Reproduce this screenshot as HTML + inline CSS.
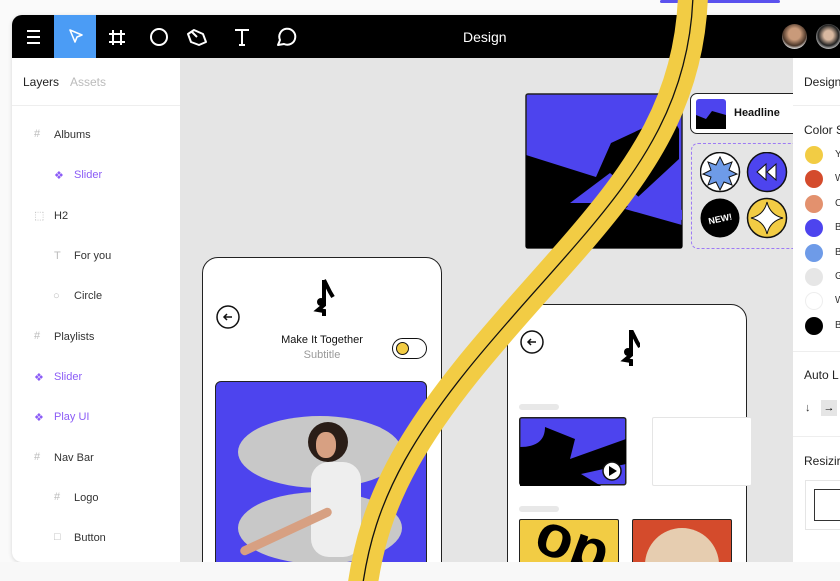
<!DOCTYPE html>
<html><head><style>
*{margin:0;padding:0;box-sizing:border-box}
body{width:840px;height:581px;background:#fafafa;font-family:"Liberation Sans",sans-serif;position:relative;overflow:hidden}
.abs{position:absolute}
.win{left:12px;top:15px;width:840px;height:547px;background:#e5e5e5;border-radius:10px;overflow:hidden;box-shadow:0 1px 4px rgba(0,0,0,.15)}
.top{left:0;top:0;width:840px;height:43px;background:#000}
.left{left:0;top:43px;width:168px;height:504px;background:#fff}
.right{left:781px;top:43px;width:60px;height:504px;background:#fff;z-index:5}
.layer{position:absolute;font-size:11px;color:#333}
.layer.p{color:#8b5cf6}
.ic{position:absolute;font-size:11px;color:#bbb}
.sw{position:absolute;left:12px;width:18px;height:18px;border-radius:50%}
.rt{position:absolute;left:42px;font-size:10px;color:#333}
</style></head><body>
<div class="abs win">
 <div class="abs top">
  <svg class="abs" style="left:0;top:0" width="300" height="43">
   <g stroke="#fff" stroke-width="2" fill="none">
    <path d="M15 16h13M15 22h13M15 28h13"/>
   </g>
   <rect x="42" y="0" width="42" height="43" fill="#4b9cf5"/>
   <path d="M58 15l12 5-5 2-2 5z" stroke="#fff" stroke-width="1.6" fill="none" stroke-linejoin="round"/>
   <g stroke="#fff" stroke-width="2" fill="none">
    <path d="M101 15v15M109 15v15M97 19h16M97 27h16"/>
    <circle cx="147" cy="22" r="8"/>
    <path d="M182 15l9 4 3 8-7 3-8-3-3-8zM180 17l5 5" stroke-linejoin="round"/>
    <path d="M223 15h14M230 15v15M227 30h6"/>
    <path d="M266 30l2-5a8 8 0 1 1 4 4z" stroke-linejoin="round"/>
   </g>
  </svg>
  <div class="abs" style="left:451px;top:14px;color:#fff;font-size:14px">Design</div>
  <div class="abs" style="left:770px;top:9px;width:25px;height:25px;border-radius:50%;background:radial-gradient(circle at 50% 40%,#c99a7a 30%,#4a3528 60%,#ddd 75%)"></div>
  <div class="abs" style="left:804px;top:9px;width:25px;height:25px;border-radius:50%;background:radial-gradient(circle at 50% 45%,#d8b8a0 25%,#222 55%,#ccc 75%)"></div>
 </div>
 <div class="abs left">
  <div class="abs" style="left:11px;top:17px;font-size:12px;color:#222">Layers</div>
  <div class="abs" style="left:58px;top:17px;font-size:12px;color:#bbb">Assets</div>
  <div class="abs" style="left:0;top:47px;width:168px;height:1px;background:#eee"></div>
  <span class="ic" style="left:22px;top:70px">#</span><span class="layer" style="left:42px;top:71px">Albums</span>
  <span class="ic" style="left:42px;top:111px;color:#8b5cf6">❖</span><span class="layer p" style="left:62px;top:111px">Slider</span>
  <span class="ic" style="left:22px;top:151px">⬚</span><span class="layer" style="left:42px;top:152px">H2</span>
  <span class="ic" style="left:42px;top:192px">T</span><span class="layer" style="left:62px;top:192px">For you</span>
  <span class="ic" style="left:41px;top:232px">○</span><span class="layer" style="left:62px;top:232px">Circle</span>
  <span class="ic" style="left:22px;top:272px">#</span><span class="layer" style="left:42px;top:273px">Playlists</span>
  <span class="ic" style="left:22px;top:313px;color:#8b5cf6">❖</span><span class="layer p" style="left:42px;top:313px">Slider</span>
  <span class="ic" style="left:22px;top:353px;color:#8b5cf6">❖</span><span class="layer p" style="left:42px;top:353px">Play UI</span>
  <span class="ic" style="left:22px;top:393px">#</span><span class="layer" style="left:42px;top:394px">Nav Bar</span>
  <span class="ic" style="left:42px;top:433px">#</span><span class="layer" style="left:62px;top:434px">Logo</span>
  <span class="ic" style="left:42px;top:473px">□</span><span class="layer" style="left:62px;top:474px">Button</span>
 </div>
 <div class="abs right">
  <div class="abs" style="left:11px;top:17px;font-size:12px;color:#222">Design</div>
  <div class="abs" style="left:0;top:47px;width:60px;height:1px;background:#eee"></div>
  <div class="abs" style="left:11px;top:65px;font-size:12px;color:#222">Color S</div>
  <div class="sw" style="top:88px;background:#f2cc44"></div><span class="rt" style="top:91px">Y</span>
  <div class="sw" style="top:112px;background:#d44b2c"></div><span class="rt" style="top:115px">W</span>
  <div class="sw" style="top:137px;background:#e3916e"></div><span class="rt" style="top:140px">C</span>
  <div class="sw" style="top:161px;background:#4d44ee"></div><span class="rt" style="top:164px">B</span>
  <div class="sw" style="top:186px;background:#6e9be8"></div><span class="rt" style="top:189px">B</span>
  <div class="sw" style="top:210px;background:#e6e6e6"></div><span class="rt" style="top:213px">G</span>
  <div class="sw" style="top:234px;background:#fff;border:1px solid #eee"></div><span class="rt" style="top:237px">W</span>
  <div class="sw" style="top:259px;background:#000"></div><span class="rt" style="top:262px">B</span>
  <div class="abs" style="left:0;top:293px;width:60px;height:1px;background:#eee"></div>
  <div class="abs" style="left:11px;top:310px;font-size:12px;color:#222">Auto L</div>
  <div class="abs" style="left:12px;top:344px;font-size:11px;color:#333">↓</div>
  <div class="abs" style="left:28px;top:342px;width:16px;height:16px;background:#e5e5e5;font-size:11px;text-align:center;line-height:16px">→</div>
  <div class="abs" style="left:0;top:378px;width:60px;height:1px;background:#eee"></div>
  <div class="abs" style="left:11px;top:396px;font-size:12px;color:#222">Resizir</div>
  <div class="abs" style="left:12px;top:422px;width:50px;height:50px;border:1px solid #e5e5e5"></div>
  <div class="abs" style="left:21px;top:431px;width:40px;height:32px;border:1px solid #333"></div>
 </div>
 <!-- big artwork -->
 <svg class="abs" style="left:513px;top:78px" width="158" height="156">
  <rect x="1" y="1" width="156" height="154" rx="2" fill="#4d44ee" stroke="#222" stroke-width="1.5"/>
  <path d="M1 62l70 22 15-34 60-28 8 14v30L100 116l57 16v23H1z" fill="#000"/>
  <path d="M45 110l40-30 30 25 42 12v10L90 110z" fill="#4d44ee"/>
 </svg>
 <div class="abs" style="left:678px;top:78px;width:110px;height:41px;background:#fff;border:1.5px solid #222;border-radius:7px"></div>
 <svg class="abs" style="left:684px;top:84px" width="30" height="30"><rect width="30" height="30" rx="3" fill="#4d44ee"/><path d="M0 16l10 4 6-8 14 4v14H0z" fill="#000"/></svg>
 <div class="abs" style="left:722px;top:92px;font-size:11px;font-weight:bold;color:#111">Headline</div>
 <div class="abs" style="left:679px;top:128px;width:110px;height:106px;border:1.5px dashed #9d7af5;border-radius:7px"></div>
 <svg class="abs" style="left:688px;top:137px" width="92" height="90">
  <circle cx="20" cy="20" r="19.5" fill="#fff" stroke="#111" stroke-width="1.5"/>
  <path d="M20 5l4 8 8-3-3 8 8 4-8 3 3 8-8-3-4 8-4-8-8 3 3-8-8-3 8-4-3-8 8 3z" fill="#6e9be8" stroke="#111"/>
  <circle cx="67" cy="20" r="19.5" fill="#4d44ee" stroke="#111" stroke-width="1.5"/>
  <path d="M66 12l-9 8 9 8zM76 12l-9 8 9 8z" fill="#fff" stroke="#111"/>
  <circle cx="20" cy="66" r="19.5" fill="#000"/>
  <text x="20" y="70" font-size="9" font-weight="bold" fill="#fff" text-anchor="middle" transform="rotate(-12 20 66)" font-family="Liberation Sans">NEW!</text>
  <circle cx="67" cy="66" r="19.5" fill="#f2cc44" stroke="#111" stroke-width="1.5"/>
  <path d="M67 50q3 13 16 16q-13 3-16 16q-3-13-16-16q13-3 16-16z" fill="#fff" stroke="#111"/>
 </svg>
 <!-- phone 1 -->
 <div class="abs" style="left:190px;top:242px;width:240px;height:330px;background:#fff;border:1.5px solid #222;border-radius:16px"></div>
 <svg class="abs" style="left:203px;top:260px" width="230" height="70">
  <circle cx="13" cy="42" r="11" fill="none" stroke="#111" stroke-width="1.5"/>
  <path d="M17 42h-8M12 39l-3 3 3 3" stroke="#111" stroke-width="1.5" fill="none"/>
  <path d="M109 5v25l-6 5 6 1v5 M109 5l6 12 3 5" stroke="#000" stroke-width="4" fill="none"/>
  <circle cx="106" cy="27" r="4" fill="#000"/>
 </svg>
 <div class="abs" style="left:240px;top:319px;width:140px;text-align:center;font-size:11px;color:#111">Make It Together</div>
 <div class="abs" style="left:240px;top:334px;width:140px;text-align:center;font-size:11px;color:#999">Subtitle</div>
 <div class="abs" style="left:380px;top:323px;width:35px;height:21px;border:1.5px solid #111;border-radius:11px"><div style="position:absolute;left:3px;top:3px;width:13px;height:13px;border-radius:50%;background:#f2cc44;border:1px solid #111"></div></div>
 <div class="abs" style="left:203px;top:366px;width:212px;height:190px;background:#4d44ee;border:1.5px solid #222;border-radius:6px;overflow:hidden">
  <div style="position:absolute;left:22px;top:34px;width:164px;height:72px;border-radius:50%;background:#c8c8c8"></div>
  <div style="position:absolute;left:22px;top:110px;width:164px;height:72px;border-radius:50%;background:#c8c8c8"></div>
  <div style="position:absolute;left:92px;top:40px;width:40px;height:40px;border-radius:50%;background:#2a1d17"></div>
  <div style="position:absolute;left:100px;top:50px;width:20px;height:26px;border-radius:45%;background:#d7a082"></div>
  <div style="position:absolute;left:95px;top:80px;width:50px;height:95px;border-radius:18px;background:#eee"></div>
  <div style="position:absolute;left:20px;top:145px;width:100px;height:9px;background:#d7a082;transform:rotate(-25deg);border-radius:5px"></div>
 </div>
 <!-- phone 2 -->
 <div class="abs" style="left:495px;top:289px;width:240px;height:290px;background:#fff;border:1.5px solid #222;border-radius:16px"></div>
 <svg class="abs" style="left:508px;top:315px" width="120" height="50">
  <circle cx="12" cy="12" r="11" fill="none" stroke="#111" stroke-width="1.5"/>
  <path d="M16 12h-8M11 9l-3 3 3 3" stroke="#111" stroke-width="1.5" fill="none"/>
  <path d="M111 0v25l-6 5 6 1v5 M111 0l6 12 3 5" stroke="#000" stroke-width="4" fill="none"/>
  <circle cx="108" cy="22" r="4" fill="#000"/>
 </svg>
 <div class="abs" style="left:507px;top:389px;width:40px;height:6px;background:#e8e8e8;border-radius:3px"></div>
 <svg class="abs" style="left:507px;top:402px" width="108" height="69">
  <rect x=".75" y=".75" width="106" height="67" rx="2" fill="#4d44ee" stroke="#222" stroke-width="1.5"/>
  <path d="M1 30q25 0 25-20l30 12-5 20 56-20v25l-45 10 20 12H1z" fill="#000"/>
  <circle cx="93" cy="54" r="9" fill="#fff" stroke="#111" stroke-width="1.5"/><path d="M90 49v10l8-5z" fill="#000"/>
 </svg>
 <div class="abs" style="left:640px;top:402px;width:100px;height:69px;border:1px solid #e5e5e5;border-radius:2px;background:#fff"></div>
 <div class="abs" style="left:507px;top:491px;width:40px;height:6px;background:#e8e8e8;border-radius:3px"></div>
 <div class="abs" style="left:507px;top:504px;width:100px;height:60px;background:#f2cc44;border:1.5px solid #222;border-radius:2px;overflow:hidden"><div style="font-size:60px;font-weight:bold;line-height:50px;margin-left:16px;transform:rotate(20deg)">op</div></div>
 <div class="abs" style="left:620px;top:504px;width:100px;height:60px;background:#d44b2c;border:1.5px solid #222;border-radius:2px;overflow:hidden"><div style="position:absolute;left:12px;top:8px;width:74px;height:74px;border-radius:50%;background:#e6cdb0"></div></div>
</div>
<div class="abs" style="left:0;top:562px;width:840px;height:19px;background:#f8f8f8"></div>
<div class="abs" style="left:660px;top:0;width:120px;height:3px;background:#5b52ee;border-radius:2px"></div>
<svg class="abs" style="left:0;top:0" width="840" height="581">
 <path d="M693 -5C690 100 640 170 580 240C520 310 450 380 405 460C380 505 368 545 362 590" stroke="#f2cc44" stroke-width="30" fill="none"/>
 <path d="M693 -5C690 100 640 170 580 240C520 310 450 380 405 460C380 505 368 545 362 590" stroke="#111" stroke-width="1.3" fill="none"/>
</svg>
</body></html>
